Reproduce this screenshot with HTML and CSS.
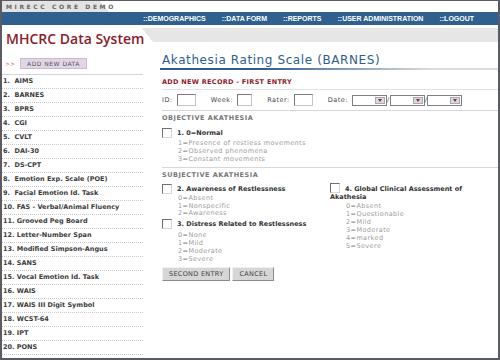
FILE: index.html
```html
<!DOCTYPE html>
<html lang="en">
<head>
    <meta charset="UTF-8">
    <title>MHCRC Data System</title>
    <link rel="stylesheet" href="styles.css">
</head>
<body>
    <div class="frame">
        <div class="top-strip">MIRECC CORE DEMO</div>
        <div class="navbar">
            <a href="#">::DEMOGRAPHICS</a>
            <a href="#">::DATA FORM</a>
            <a href="#">::REPORTS</a>
            <a href="#">::USER ADMINISTRATION</a>
            <a href="#">::LOGOUT</a>
        </div>
        <div class="brand">
            <h1>MHCRC Data System</h1>
        </div>
        <div class="layout">
            <div class="sidebar">
                <div class="add-row">
                    <span class="arrows">&gt;&gt;</span>
                    <span class="add-btn">ADD NEW DATA</span>
                </div>
                <ul class="scale-list">
                    <li>1.&nbsp; AIMS</li>
                    <li>2.&nbsp; BARNES</li>
                    <li>3.&nbsp; BPRS</li>
                    <li>4.&nbsp; CGI</li>
                    <li>5.&nbsp; CVLT</li>
                    <li>6.&nbsp; DAI-30</li>
                    <li>7.&nbsp; DS-CPT</li>
                    <li>8.&nbsp; Emotion Exp. Scale (POE)</li>
                    <li>9.&nbsp; Facial Emotion Id. Task</li>
                    <li>10. FAS - Verbal/Animal Fluency</li>
                    <li>11. Grooved Peg Board</li>
                    <li>12. Letter-Number Span</li>
                    <li>13. Modified Simpson-Angus</li>
                    <li>14. SANS</li>
                    <li>15. Vocal Emotion Id. Task</li>
                    <li>16. WAIS</li>
                    <li>17. WAIS III Digit Symbol</li>
                    <li>18. WCST-64</li>
                    <li>19. IPT</li>
                    <li>20. PONS</li>
                </ul>
            </div>
            <div class="content">
                <h2 class="page-title">Akathesia Rating Scale (BARNES)</h2>
                <h3 class="record-head">ADD NEW RECORD - FIRST ENTRY</h3>
                <div class="id-row">
                    <label>ID:</label><span class="field f-id"></span>
                    <label>Week:</label><span class="field f-small"></span>
                    <label>Rater:</label><span class="field f-rater"></span>
                    <label>Date:</label>
                    <span class="select"><span class="drop"></span></span>/<span class="select"><span class="drop"></span></span>/<span class="select"><span class="drop"></span></span>
                </div>
                <div class="section-head">OBJECTIVE AKATHESIA</div>
                <div class="item">
                    <div class="item-title"><span class="box"></span>1. 0=Normal</div>
                    <ul class="options">
                        <li>1=Presence of restless movements</li>
                        <li>2=Observed phenomena</li>
                        <li>3=Constant movements</li>
                    </ul>
                </div>
                <div class="section-head">SUBJECTIVE AKATHESIA</div>
                <div class="columns">
                    <div class="col">
                        <div class="item">
                            <div class="item-title"><span class="box"></span>2. Awareness of Restlessness</div>
                            <ul class="options tight">
                                <li>0=Absent</li>
                                <li>1=Nonspecific</li>
                                <li>2=Awareness</li>
                            </ul>
                        </div>
                        <div class="item">
                            <div class="item-title"><span class="box"></span>3. Distress Related to Restlessness</div>
                            <ul class="options">
                                <li>0=None</li>
                                <li>1=Mild</li>
                                <li>2=Moderate</li>
                                <li>3=Severe</li>
                            </ul>
                        </div>
                    </div>
                    <div class="col">
                        <div class="item">
                            <div class="item-title wrap"><span class="box"></span>4. Global Clinical Assessment of Akathesia</div>
                            <ul class="options">
                                <li>0=Absent</li>
                                <li>1=Questionable</li>
                                <li>2=Mild</li>
                                <li>3=Moderate</li>
                                <li>4=marked</li>
                                <li>5=Severe</li>
                            </ul>
                        </div>
                    </div>
                </div>
                <div class="buttons">
                    <button type="button">SECOND ENTRY</button>
                    <button type="button">CANCEL</button>
                </div>
            </div>
        </div>
    </div>
</body>
</html>
```

FILE: styles.css
```css
* {
    box-sizing: border-box;
    margin: 0;
    padding: 0;
}
body {
    font-family: 'DejaVu Sans', Verdana, sans-serif;
    background-color: #ffffff;
    width: 500px;
    height: 360px;
    overflow: hidden;
}
.frame {
    width: 500px;
    height: 360px;
    border: 2px solid #5b5b63;
    border-top-width: 1px;
    overflow: hidden;
}
.top-strip {
    height: 11px;
    padding-left: 4px;
    font-size: 6px;
    font-weight: bold;
    letter-spacing: 2.6px;
    line-height: 11px;
    color: #666666;
    background: linear-gradient(50deg, #e3e3e3 82px, #ffffff 82px);
}
.navbar {
    height: 13px;
    background-color: #30608f;
    display: flex;
    align-items: center;
    padding-left: 141px;
}
.navbar a {
    font-family: 'Liberation Sans', Arial, sans-serif;
    font-size: 7px;
    font-weight: bold;
    color: #ffffff;
    text-decoration: none;
    margin-right: 16px;
}
.brand {
    height: 27px;
    background: linear-gradient(50deg, #ffffff 116px, #e6e6e6 116px) no-repeat 0 3px / 100% 14px;
}
.brand h1 {
    font-family: 'Open Sans', sans-serif;
    font-size: 14px;
    font-weight: 600;
    color: #8b1c2c;
    padding-left: 4px;
    line-height: 22px;
    padding-top: 3px;
}
.layout {
    display: flex;
}
.sidebar {
    flex: 0 0 141px;
    padding-top: 5px;
}
.add-row {
    display: flex;
    align-items: center;
    padding-left: 3px;
    border-bottom: 1px solid #d4d4d4;
    padding-bottom: 4px;
    height: 18px;
}
.arrows {
    font-size: 6px;
    color: #c0607a;
    margin-right: 5px;
}
.add-btn {
    font-size: 6px;
    letter-spacing: 0.5px;
    color: #555555;
    background-color: #e2d6e6;
    border: 1px solid #cbb9d2;
    padding: 1px 6px;
}
.scale-list {
    list-style: none;
}
.scale-list li {
    height: 14px;
    line-height: 13px;
    padding-left: 1px;
    font-size: 6.5px;
    font-weight: bold;
    color: #3c3c3c;
    border-bottom: 1px dotted #c8c8c8;
    white-space: nowrap;
}
.content {
    flex: 1;
    min-width: 0;
    padding-left: 19px;
}
.page-title {
    font-size: 12px;
    font-weight: normal;
    letter-spacing: 0.6px;
    color: #2e5d8c;
    height: 18px;
    line-height: 16px;
    margin-left: -2px;
    padding-left: 2px;
    border-bottom: 2px solid;
    border-image: linear-gradient(to right, #2e5d8c 30%, #dcdcdc 80%) 1;
}
.record-head {
    font-size: 6.5px;
    font-weight: bold;
    color: #8b1c2c;
    letter-spacing: 0.3px;
    padding: 8px 0 3px 0;
    border-bottom: 1px solid #e2e2e2;
}
.id-row {
    display: flex;
    align-items: center;
    height: 21px;
    font-size: 6.5px;
    letter-spacing: 0.5px;
    color: #444444;
    border-bottom: 1px solid #d8d8d8;
}
.id-row label {
    margin-right: 4px;
}
.field {
    display: inline-block;
    height: 12px;
    border: 1px solid #c4c4c4;
    border-top-color: #7a7a7a;
    border-left-color: #7a7a7a;
    margin-right: 15px;
}
.f-id { width: 19px; }
.f-small { width: 15px; }
.f-rater { width: 19px; }
.select {
    display: inline-flex;
    justify-content: flex-end;
    align-items: center;
    width: 35px;
    height: 11px;
    border: 1px solid #7f7f87;
    background-color: #ffffff;
    padding-right: 1px;
}
.drop {
    width: 10px;
    height: 7px;
    background-color: #d9d9df;
    border: 1px solid #a8a8b0;
    position: relative;
}
.drop::after {
    content: "";
    position: absolute;
    left: 2px;
    top: 1px;
    border-left: 2px solid transparent;
    border-right: 2px solid transparent;
    border-top: 3px solid #9b2434;
}
.section-head {
    font-size: 6.5px;
    font-weight: bold;
    letter-spacing: 0.5px;
    color: #777777;
    padding-top: 3px;
    height: 12px;
}
.item {
    padding-bottom: 2px;
}
.item-title {
    display: flex;
    align-items: center;
    font-size: 6.5px;
    font-weight: bold;
    color: #333333;
    height: 11px;
    margin-top: 4px;
}
.item-title.wrap {
    display: block;
    height: auto;
    line-height: 8px;
}
.box {
    display: inline-block;
    width: 10px;
    height: 10px;
    margin-right: 5px;
    border: 1px solid #d6d6d6;
    border-top-color: #6f6f6f;
    border-left-color: #6f6f6f;
    vertical-align: -2px;
}
.options {
    list-style: none;
    padding-left: 16px;
    padding-top: 1px;
}
.options li {
    font-size: 6.5px;
    line-height: 8px;
    letter-spacing: 0.4px;
    color: #9c9c9c;
}
.options.tight li {
    line-height: 7.5px;
}
.item + .section-head {
    margin-top: 2px;
    border-top: 1px solid #d8d8d8;
}
.columns {
    display: flex;
}
.col {
    width: 170px;
}
.col .item {
    padding-bottom: 0;
}
.col .item + .item .item-title {
    margin-top: 1px;
}
.buttons {
    display: flex;
    gap: 2px;
    padding-top: 4px;
}
button {
    font-family: 'DejaVu Sans', Verdana, sans-serif;
    font-size: 6.5px;
    letter-spacing: 0.3px;
    color: #444444;
    background-color: #d6d6d6;
    border: 1px solid #8c8c8c;
    border-top-color: #f0f0f0;
    border-left-color: #f0f0f0;
    padding: 2px 6px;
}
```
